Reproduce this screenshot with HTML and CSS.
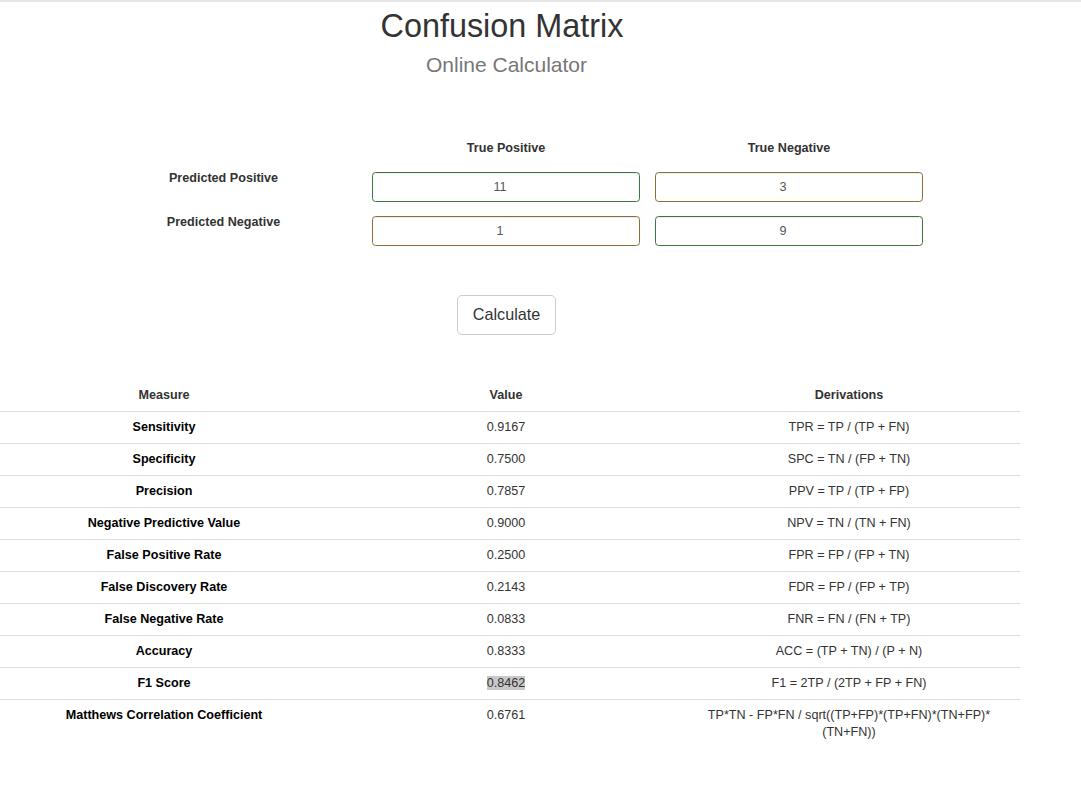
FILE: index.html
```html
<!DOCTYPE html>
<html lang="en">
<head>
<meta charset="utf-8">
<title>Confusion Matrix Online Calculator</title>
<link rel="stylesheet" href="styles.css">
</head>
<body>
<div class="topline"></div>
<div class="wrap">
  <header class="hero">
    <h1 class="title">Confusion Matrix</h1>
    <div class="subtitle">Online Calculator</div>
  </header>

  <form class="matrix">
    <div class="cell-empty"></div>
    <div class="col-head">True Positive</div>
    <div class="col-head">True Negative</div>

    <label class="row-label">Predicted Positive</label>
    <input class="field ok" type="text" value="11">
    <input class="field warn" type="text" value="3">

    <label class="row-label">Predicted Negative</label>
    <input class="field warn" type="text" value="1">
    <input class="field ok" type="text" value="9">
  </form>

  <div class="actions">
    <button class="btn" type="button">Calculate</button>
  </div>
</div>

<table class="results">
  <colgroup>
    <col class="c1"><col class="c2"><col class="c3">
  </colgroup>
  <thead>
    <tr><th>Measure</th><th>Value</th><th class="d">Derivations</th></tr>
  </thead>
  <tbody>
    <tr><td class="m">Sensitivity</td><td>0.9167</td><td class="d">TPR = TP / (TP + FN)</td></tr>
    <tr><td class="m">Specificity</td><td>0.7500</td><td class="d">SPC = TN / (FP + TN)</td></tr>
    <tr><td class="m">Precision</td><td>0.7857</td><td class="d">PPV = TP / (TP + FP)</td></tr>
    <tr><td class="m">Negative Predictive Value</td><td>0.9000</td><td class="d">NPV = TN / (TN + FN)</td></tr>
    <tr><td class="m">False Positive Rate</td><td>0.2500</td><td class="d">FPR = FP / (FP + TN)</td></tr>
    <tr><td class="m">False Discovery Rate</td><td>0.2143</td><td class="d">FDR = FP / (FP + TP)</td></tr>
    <tr><td class="m">False Negative Rate</td><td>0.0833</td><td class="d">FNR = FN / (FN + TP)</td></tr>
    <tr><td class="m">Accuracy</td><td>0.8333</td><td class="d">ACC = (TP + TN) / (P + N)</td></tr>
    <tr><td class="m">F1 Score</td><td><span class="sel">0.8462</span></td><td class="d">F1 = 2TP / (2TP + FP + FN)</td></tr>
    <tr><td class="m">Matthews Correlation Coefficient</td><td>0.6761</td><td class="d">TP*TN - FP*FN / sqrt((TP+FP)*(TP+FN)*(TN+FP)*<br>(TN+FN))</td></tr>
  </tbody>
</table>
</body>
</html>
```

FILE: styles.css
```css
* { box-sizing: border-box; }

html, body {
  margin: 0;
  padding: 0;
  background: #fff;
}

body {
  font-family: "Liberation Sans", Arial, sans-serif;
  font-size: 12.6px;
  color: #333;
}

.topline {
  height: 2px;
  background: #e6e6e6;
}

.wrap {
  width: 1013px;
}

.hero {
  text-align: center;
}

.title {
  margin: 6.5px 0 0 0;
  padding-right: 9px;
  font-size: 32.4px;
  font-weight: 400;
  line-height: 35.6px;
  color: #333;
}

.subtitle {
  margin-top: 8.5px;
  font-size: 21px;
  line-height: 23px;
  color: #777;
}

.matrix {
  margin: 62.5px 0 0 0;
  display: grid;
  grid-template-columns: 357px 268px 268px;
  column-gap: 15px;
  row-gap: 14px;
}

.col-head {
  text-align: center;
  font-weight: 700;
  line-height: 18px;
  height: 20px;
  padding-top: 1px;
}

.row-label {
  font-weight: 700;
  line-height: 18px;
  text-align: center;
  padding-left: 90px;
  margin-top: -3px;
  align-self: start;
}

.field {
  height: 30px;
  width: 100%;
  border: 1px solid #ccc;
  border-radius: 3.6px;
  font-family: inherit;
  font-size: 12.6px;
  color: #555;
  text-align: center;
  background: #fff;
  box-shadow: inset 0 1px 1px rgba(0,0,0,.075);
  padding: 0 22px 0 10px;
  outline: none;
}

.field.ok { border-color: #3c763d; }
.field.warn { border-color: #8a6d3b; }

.actions {
  margin-top: 49px;
  display: flex;
  justify-content: center;
}

.btn {
  font-family: inherit;
  font-size: 16.2px;
  line-height: 21.6px;
  padding: 8.2px 14.4px;
  color: #333;
  background: #fff;
  border: 1px solid #ccc;
  border-radius: 5px;
  cursor: pointer;
}

.results {
  margin-top: 44px;
  width: 1020px;
  border-collapse: collapse;
  table-layout: fixed;
}

.results col.c1 { width: 328px; }
.results col.c2 { width: 356px; }
.results col.c3 { width: 336px; }

.results th,
.results td {
  padding: 7px;
  line-height: 17px;
  text-align: center;
  vertical-align: top;
}

.results th.d,
.results td.d {
  padding-right: 13px;
}

.results th {
  font-weight: 700;
  color: #333;
  padding-top: 8px;
  border-bottom: 1px solid #ddd;
}

.results td {
  border-top: 1px solid #ddd;
}

.results tbody tr:first-child td {
  border-top: 0;
}

.results td.m {
  font-weight: 700;
  color: #000;
}

.sel {
  background: #c8c8c8;
}
```
